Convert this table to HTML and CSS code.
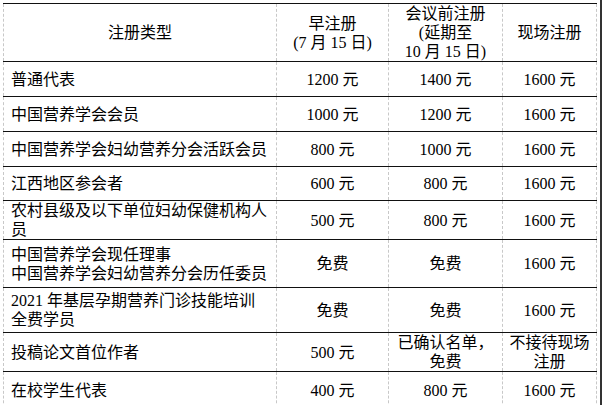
FILE: index.html
```html
<!DOCTYPE html>
<html lang="zh">
<head>
<meta charset="utf-8">
<link rel="stylesheet" href="styles.css">
</head>
<body>
<div class="frame">
<table class="fees">
<colgroup>
<col class="c1"><col class="c2"><col class="c3"><col class="c4">
</colgroup>
<thead>
<tr class="h">
<th>注册类型</th>
<th>早注册<br>(7 月 15 日)</th>
<th>会议前注册<br>(延期至<br>10 月 15 日)</th>
<th>现场注册</th>
</tr>
</thead>
<tbody>
<tr class="r35"><td>普通代表</td><td>1200 元</td><td>1400 元</td><td>1600 元</td></tr>
<tr class="r35"><td>中国营养学会会员</td><td>1000 元</td><td>1200 元</td><td>1600 元</td></tr>
<tr class="r35"><td>中国营养学会妇幼营养分会活跃会员</td><td>800 元</td><td>1000 元</td><td>1600 元</td></tr>
<tr class="r34"><td>江西地区参会者</td><td>600 元</td><td>800 元</td><td>1600 元</td></tr>
<tr class="r38"><td>农村县级及以下单位妇幼保健机构人<br>员</td><td>500 元</td><td>800 元</td><td>1600 元</td></tr>
<tr class="r48"><td>中国营养学会现任理事<br>中国营养学会妇幼营养分会历任委员</td><td>免费</td><td>免费</td><td>1600 元</td></tr>
<tr class="r45"><td>2021 年基层孕期营养门诊技能培训<br>全费学员</td><td>免费</td><td>免费</td><td>1600 元</td></tr>
<tr class="r39"><td>投稿论文首位作者</td><td>500 元</td><td>已确认名单，<br>免费</td><td>不接待现场<br>注册</td></tr>
<tr class="r37"><td>在校学生代表</td><td>400 元</td><td>800 元</td><td>1600 元</td></tr>
</tbody>
</table>
</div>
</body>
</html>
```
FILE: styles.css
```css
html, body {
  margin: 0;
  padding: 0;
  background: #ffffff;
}
.frame {
  width: 602px;
  height: 405px;
  padding: 3px 0 0 3px;
  box-sizing: border-box;
  border-right: 2px solid #333333;
}
.fees {
  border-collapse: collapse;
  table-layout: fixed;
  width: 593px;
  font-family: "Liberation Serif", "Noto Sans CJK SC", serif;
  font-size: 16px;
  line-height: 19px;
  color: #000000;
}
.c1 { width: 273px; }
.c2 { width: 112px; }
.c3 { width: 114px; }
.c4 { width: 94px; }
.fees th, .fees td {
  border-top: 1.5px solid #111111;
  border-bottom: 1.5px solid #111111;
  border-left: 1px dashed #c8c8c8;
  border-right: 1px dashed #c8c8c8;
  padding: 0;
  text-align: center;
  vertical-align: middle;
  font-weight: normal;
  white-space: nowrap;
}
.fees td:first-child {
  text-align: left;
  padding-left: 7px;
}
.h { height: 57px; }
.r34 { height: 34px; }
.r35 { height: 35px; }
.r37 { height: 37px; }
.r38 { height: 38px; }
.r39 { height: 39px; }
.r45 { height: 45px; }
.r48 { height: 48px; }
```
